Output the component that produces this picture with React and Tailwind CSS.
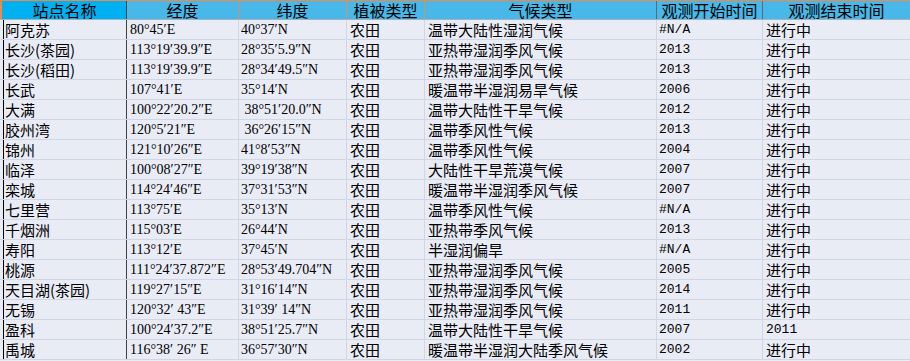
import React from 'react';

const rows = [
    ['阿克苏', '80°45′E', '40°37′N', '农田', '温带大陆性湿润气候', '#N/A', '进行中'],
    ['长沙(茶园)', '113°19′39.9″E', '28°35′5.9″N', '农田', '亚热带湿润季风气候', '2013', '进行中'],
    ['长沙(稻田)', '113°19′39.9″E', '28°34′49.5″N', '农田', '亚热带湿润季风气候', '2013', '进行中'],
    ['长武', '107°41′E', '35°14′N', '农田', '暖温带半湿润易旱气候', '2006', '进行中'],
    ['大满', '100°22′20.2″E', ' 38°51′20.0″N', '农田', '温带大陆性干旱气候', '2012', '进行中'],
    ['胶州湾', '120°5′21″E', ' 36°26′15″N', '农田', '温带季风性气候', '2013', '进行中'],
    ['锦州', '121°10′26″E', '41°8′53″N', '农田', '温带季风性气候', '2004', '进行中'],
    ['临泽', '100°08′27″E', '39°19′38″N', '农田', '大陆性干旱荒漠气候', '2007', '进行中'],
    ['栾城', '114°24′46″E', '37°31′53″N', '农田', '暖温带半湿润季风气候', '2007', '进行中'],
    ['七里营', '113°75′E', '35°13′N', '农田', '温带季风性气候', '#N/A', '进行中'],
    ['千烟洲', '115°03′E', '26°44′N', '农田', '亚热带季风气候', '2013', '进行中'],
    ['寿阳', '113°12′E', '37°45′N', '农田', '半湿润偏旱', '#N/A', '进行中'],
    ['桃源', '111°24′37.872″E', '28°53′49.704″N', '农田', '亚热带湿润季风气候', '2005', '进行中'],
    ['天目湖(茶园)', '119°27′15″E', '31°16′14″N', '农田', '亚热带湿润季风气候', '2014', '进行中'],
    ['无锡', '120°32′ 43″E', '31°39′ 14″N', '农田', '亚热带湿润季风气候', '2011', '进行中'],
    ['盈科', '100°24′37.2″E', '38°51′25.7″N', '农田', '温带大陆性干旱气候', '2007', '2011'],
    ['禹城', '116°38′ 26″ E', '36°57′30″N', '农田', '暖温带半湿润大陆季风气候', '2002', '进行中'],
];

const cjk = "font-['Noto_Sans_CJK_SC',sans-serif]";
const serif = "font-['Liberation_Serif','Noto_Sans_CJK_SC',serif]";
const mono = "font-['Liberation_Mono','Noto_Sans_CJK_SC',monospace]";

const HeaderCell = ({ w, bg, border, children }) => (
    <div className={`${w} ${bg} ${border} h-full flex items-center justify-center text-[16px] leading-[18px] text-black whitespace-nowrap ${cjk}`}>
        {children}
    </div>
);

const Row = ({ r }) => (
    <div className="flex h-[20px] border-b border-[#cfd6e6] leading-[19px]">
        <div className="w-[3px] shrink-0" />
        <div className={`w-[124px] shrink-0 border-l border-l-black border-r border-r-[#444] pl-[1px] flex items-center text-[15px] whitespace-pre ${cjk}`}>{r[0]}</div>
        <div className={`w-[112px] shrink-0 border-r border-[#cfd6e6] pl-[3px] flex items-center text-[14px] whitespace-pre ${serif}`}>{r[1]}</div>
        <div className={`w-[108px] shrink-0 border-r border-[#cfd6e6] pl-[2px] flex items-center text-[14px] whitespace-pre ${serif}`}>{r[2]}</div>
        <div className={`w-[78px] shrink-0 border-r border-[#cfd6e6] pl-[3px] flex items-center text-[15px] ${cjk}`}>{r[3]}</div>
        <div className={`w-[232px] shrink-0 border-r border-[#cfd6e6] pl-[3px] flex items-center text-[15px] whitespace-nowrap ${cjk}`}>{r[4]}</div>
        <div className={`w-[106px] shrink-0 border-r border-[#cfd6e6] pl-[2px] flex items-center text-[13px] ${mono}`}>{r[5]}</div>
        <div className={`flex-1 pl-[3px] flex items-center ${r[6] === '2011' ? `text-[13px] ${mono}` : `text-[15px] ${cjk}`}`}>{r[6]}</div>
    </div>
);

export default function App() {
    return (
        <div className="w-[910px] h-[361px] overflow-hidden bg-[#e9ebf5] text-black">
            <div className="flex h-[20px] border-t border-[#f0884a] border-b border-b-[#9fb3c8]">
                <div className="w-[3px] shrink-0 border-l-2 border-[#f0884a] bg-[#00b0f0]" />
                <HeaderCell w="w-[124px] shrink-0" bg="bg-[#00b0f0]" border="border-r border-[#444]">站点名称</HeaderCell>
                <HeaderCell w="w-[112px] shrink-0" bg="bg-[#47b8e8]" border="border-r border-[#d9905a]">经度</HeaderCell>
                <HeaderCell w="w-[108px] shrink-0" bg="bg-[#47b8e8]" border="border-r border-[#d9905a]">纬度</HeaderCell>
                <HeaderCell w="w-[78px] shrink-0" bg="bg-[#47b8e8]" border="border-r border-[#d9905a]">植被类型</HeaderCell>
                <HeaderCell w="w-[232px] shrink-0" bg="bg-[#47b8e8]" border="border-r border-[#5a6a7a]">气候类型</HeaderCell>
                <HeaderCell w="w-[106px] shrink-0" bg="bg-[#47b8e8]" border="border-r border-[#5a6a7a]">观测开始时间</HeaderCell>
                <HeaderCell w="flex-1" bg="bg-[#47b8e8]" border="">观测结束时间</HeaderCell>
            </div>
            {rows.map((r, i) => (
                <Row key={i} r={r} />
            ))}
        </div>
    );
}
